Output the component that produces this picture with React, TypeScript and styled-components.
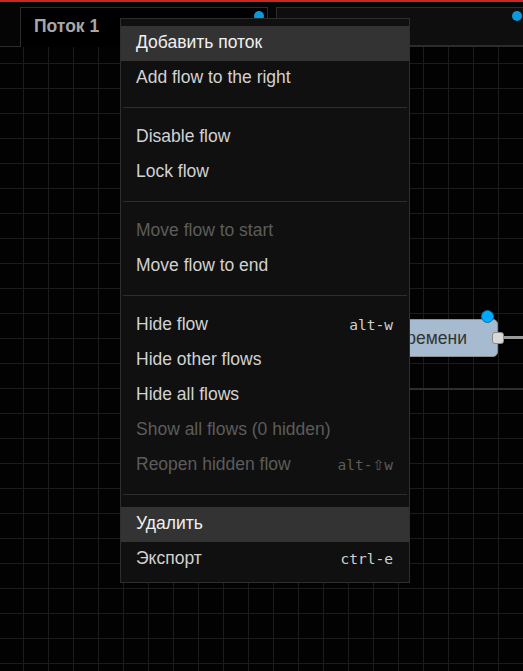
import React from "react";
import styled, { createGlobalStyle } from "styled-components";

const Global = createGlobalStyle`
  html, body { margin: 0; padding: 0; background: #000; }
  body { font-family: "Liberation Sans", Arial, sans-serif; overflow: hidden; }
  * { box-sizing: border-box; }
`;

const Page = styled.div`
  width: 523px;
  height: 671px;
  display: flex;
  flex-direction: column;
  position: relative;
  overflow: hidden;
  background: #000;
`;

const RedBar = styled.div`
  height: 2px;
  background: #c92626;
  flex: none;
`;

const TabBar = styled.div`
  height: 45px;
  flex: none;
  display: flex;
  align-items: flex-end;
  gap: 8px;
  padding-left: 20px;
  background: #050505;
  border-bottom: 1px solid #2c2c2c;
`;

const Tab = styled.div<{ $active?: boolean }>`
  position: relative;
  flex: none;
  width: ${(p) => (p.$active ? 248 : 250)}px;
  height: ${(p) => (p.$active ? 40 : 39)}px;
  margin-bottom: ${(p) => (p.$active ? -1 : 0)}px;
  background: ${(p) => (p.$active ? "#000" : "#0e0e0e")};
  border: 1px solid #2c2c2c;
  border-bottom: ${(p) => (p.$active ? "none" : "1px solid #2c2c2c")};
  display: flex;
  align-items: center;
  padding: 0 13px 2px;
  font-weight: bold;
  font-size: 17.5px;
  color: #a8a8a8;
`;

const Dot = styled.span<{ $size: number }>`
  position: absolute;
  width: ${(p) => p.$size}px;
  height: ${(p) => p.$size}px;
  border-radius: 50%;
  background: #0c98dc;
`;

const TabDot = styled(Dot)`
  top: 3px;
  right: 3px;
`;

const Workspace = styled.div`
  position: relative;
  flex: 1;
  background-color: #020202;
  background-image: linear-gradient(to right, #1c1c1c 1px, transparent 1px),
    linear-gradient(to bottom, #1c1c1c 1px, transparent 1px);
  background-size: 25px 25px;
  background-position: 23px 16px;
`;

const GroupLine = styled.div`
  position: absolute;
  left: 300px;
  right: 0;
  top: 341px;
  height: 2px;
  background: #2e2e2e;
`;

const Node = styled.div`
  position: absolute;
  left: 300px;
  top: 272px;
  width: 198px;
  height: 38px;
  border-radius: 5px;
  border: 1px solid #8e8e8e;
  background: #a6bbcf;
  display: flex;
  align-items: center;
  justify-content: flex-end;
  padding-right: 30px;
  font-size: 17.5px;
  color: #333;
`;

const NodeDot = styled(Dot)`
  top: -10px;
  right: 3px;
  background: #00aaff;
  border: 1px solid #0a6a9a;
`;

const Port = styled.div`
  position: absolute;
  right: -7px;
  top: 12px;
  width: 12px;
  height: 12px;
  border-radius: 3px;
  background: #d9d9d9;
  border: 1px solid #8a8a8a;
`;

const Wire = styled.div`
  position: absolute;
  left: 504px;
  right: 0;
  top: 289px;
  height: 3px;
  background: #9a9a9a;
`;

const Menu = styled.div`
  position: absolute;
  left: 120px;
  top: 18px;
  width: 290px;
  background: #101010;
  border: 1px solid #2e2e2e;
  padding: 7px 0 5px;
  display: flex;
  flex-direction: column;
`;

const Item = styled.div<{ $disabled?: boolean; $active?: boolean }>`
  height: 35px;
  display: flex;
  align-items: center;
  justify-content: space-between;
  padding: 0 16px 2px 15px;
  font-size: 17.5px;
  background: ${(p) => (p.$active ? "#333" : "transparent")};
  color: ${(p) => (p.$disabled ? "#5c5c5c" : p.$active ? "#f0f0f0" : "#d2d2d2")};
`;

const Shortcut = styled.span<{ $disabled?: boolean }>`
  font-family: "DejaVu Sans Mono", "Liberation Mono", monospace;
  font-size: 14.5px;
  color: ${(p) => (p.$disabled ? "#5c5c5c" : "#d0d0d0")};
`;

const ShiftGlyph = styled.span`
  font-family: "DejaVu Sans", sans-serif;
  font-size: 14px;
`;

const Separator = styled.div`
  height: 1px;
  margin: 11px 2px 12px;
  background: #2e2e2e;
`;

type Entry =
  | { sep: true }
  | { label: string; key?: string; disabled?: boolean; active?: boolean };

const entries: Entry[] = [
  { label: "Добавить поток", active: true },
  { label: "Add flow to the right" },
  { sep: true },
  { label: "Disable flow" },
  { label: "Lock flow" },
  { sep: true },
  { label: "Move flow to start", disabled: true },
  { label: "Move flow to end" },
  { sep: true },
  { label: "Hide flow", key: "alt-w" },
  { label: "Hide other flows" },
  { label: "Hide all flows" },
  { label: "Show all flows (0 hidden)", disabled: true },
  { label: "Reopen hidden flow", key: "alt-⇧w", disabled: true },
  { sep: true },
  { label: "Удалить", active: true },
  { label: "Экспорт", key: "ctrl-e" },
];

function renderKey(k: string) {
  const parts = k.split("⇧");
  if (parts.length === 1) return k;
  return (
    <>
      {parts[0]}
      <ShiftGlyph>⇧</ShiftGlyph>
      {parts[1]}
    </>
  );
}

export default function App() {
  return (
    <Page>
      <Global />
      <RedBar />
      <TabBar>
        <Tab $active>
          Поток 1
          <TabDot $size={10} />
        </Tab>
        <Tab>
          <TabDot $size={10} />
        </Tab>
      </TabBar>
      <Workspace>
        <GroupLine />
        <Node>
          времени
          <NodeDot $size={13} />
          <Port />
        </Node>
        <Wire />
      </Workspace>
      <Menu>
        {entries.map((e, i) =>
          "sep" in e ? (
            <Separator key={i} />
          ) : (
            <Item key={i} $disabled={e.disabled} $active={e.active}>
              <span>{e.label}</span>
              {e.key && (
                <Shortcut $disabled={e.disabled}>{renderKey(e.key)}</Shortcut>
              )}
            </Item>
          )
        )}
      </Menu>
    </Page>
  );
}
